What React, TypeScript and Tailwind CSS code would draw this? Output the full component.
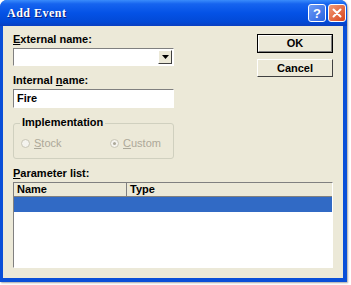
import React from 'react'

const ui = { fontFamily: '"Liberation Sans", Arial, sans-serif' }

function Radio({ checked, children }: { checked?: boolean; children: React.ReactNode }) {
  return (
    <div className="flex items-center gap-[4px] text-[11px] text-[#aca899]">
      <span className="relative w-[9px] h-[9px] rounded-full border border-[#c8c5b5] bg-[#f4f3ee] flex items-center justify-center">
        {checked && <span className="w-[3px] h-[3px] rounded-full bg-[#aca899]" />}
      </span>
      <span>{children}</span>
    </div>
  )
}

export default function App() {
  return (
    <div className="w-[351px] h-[285px] bg-white" style={ui}>
      <div className="w-[347px] h-[282px] flex flex-col rounded-t-[7px] overflow-hidden bg-[#0a4fd8] shadow-[1px_1px_2px_rgba(0,0,0,0.35)]">
        {/* title bar */}
        <div className="h-[26px] flex items-center pl-[7px] pr-[1px] bg-[linear-gradient(#3a8cfb_0%,#1664ef_15%,#0452e6_50%,#0249d6_85%,#0a3fc0_100%)]">
          <span
            className="text-white font-bold text-[12px] tracking-[0.5px]"
            style={{ fontFamily: '"Liberation Serif", "Times New Roman", serif', textShadow: '1px 1px 0 #0a1e80' }}
          >
            Add Event
          </span>
          <div className="ml-auto flex gap-[2px]">
            <div className="w-[18px] h-[18px] rounded-[3px] border border-white bg-[linear-gradient(135deg,#6d9cf6,#2a62e0)] flex items-center justify-center text-white font-bold text-[13px] leading-none">
              ?
            </div>
            <div className="w-[18px] h-[18px] rounded-[3px] border border-white bg-[linear-gradient(135deg,#f29a76,#d8451c)] flex items-center justify-center">
              <svg width="10" height="10" viewBox="0 0 10 10">
                <path d="M1.5 1.5 L8.5 8.5 M8.5 1.5 L1.5 8.5" stroke="white" strokeWidth="2" strokeLinecap="round" />
              </svg>
            </div>
          </div>
        </div>

        {/* body */}
        <div className="flex-1 ml-[3px] mr-[4px] mb-[4px] bg-[#ece9d8] px-[10px] pt-[7px]">
          <div className="flex">
            <div className="w-[161px] flex flex-col">
              <div className="text-[11px] font-bold leading-[13px] text-black">
                <span className="underline">E</span>xternal name:
              </div>
              <div className="mt-[2px] h-[18px] bg-white border border-t-[#808080] border-l-[#808080] border-b-white border-r-white flex justify-end p-px">
                <div className="w-[14px] h-full bg-[#ece9d8] border border-t-white border-l-white border-b-[#404040] border-r-[#404040] flex items-center justify-center">
                  <svg width="7" height="4" viewBox="0 0 7 4">
                    <path d="M0 0 H7 L3.5 4 Z" fill="black" />
                  </svg>
                </div>
              </div>

              <div className="mt-[8px] text-[11px] font-bold leading-[13px] text-black">
                Internal <span className="underline">n</span>ame:
              </div>
              <div className="mt-[2px] h-[19px] bg-white border border-t-[#808080] border-l-[#808080] border-b-white border-r-white flex items-center pl-[3px] text-[11px] font-bold text-black">
                Fire
              </div>

              <div className="mt-[10px] relative h-[36px] border border-[#d0d0bf] rounded-[3px] top-[5px]">
                <span className="absolute -top-[8px] left-[6px] bg-[#ece9d8] px-[2px] text-[11px] font-bold leading-[13px] text-black">
                  Implementation
                </span>
                <div className="flex pt-[11px] pl-[7px]">
                  <div className="w-[89px]">
                    <Radio>
                      <span className="underline">S</span>tock
                    </Radio>
                  </div>
                  <Radio checked>
                    <span className="underline">C</span>ustom
                  </Radio>
                </div>
              </div>
            </div>

            <div className="ml-auto w-[76px] flex flex-col gap-[6px] pt-[1px]">
              <div className="h-[19px] border border-black bg-[#ece9d8] flex">
                <div className="flex-1 border border-t-white border-l-white border-b-[#808080] border-r-[#808080] flex items-center justify-center text-[11px] font-bold text-black">
                  OK
                </div>
              </div>
              <div className="h-[18px] border border-t-white border-l-white border-b-[#404040] border-r-[#404040] bg-[#ece9d8] flex items-center justify-center text-[11px] font-bold text-black">
                Cancel
              </div>
            </div>
          </div>

          <div className="mt-[13px] text-[11px] font-bold leading-[13px] text-black">
            <span className="underline">P</span>arameter list:
          </div>
          <div className="mt-[2px] h-[86px] bg-white border border-t-[#808080] border-l-[#808080] border-b-white border-r-white flex flex-col">
            <div className="h-[14px] flex bg-[#ece9d8] border-b border-[#808080] text-[11px] font-bold leading-[13px] text-black">
              <div className="w-[113px] pl-[3px] border-r border-[#808080]">Name</div>
              <div className="pl-[3px]">Type</div>
            </div>
            <div className="h-[15px] bg-[#316ac5]" />
          </div>
        </div>
      </div>
    </div>
  )
}
